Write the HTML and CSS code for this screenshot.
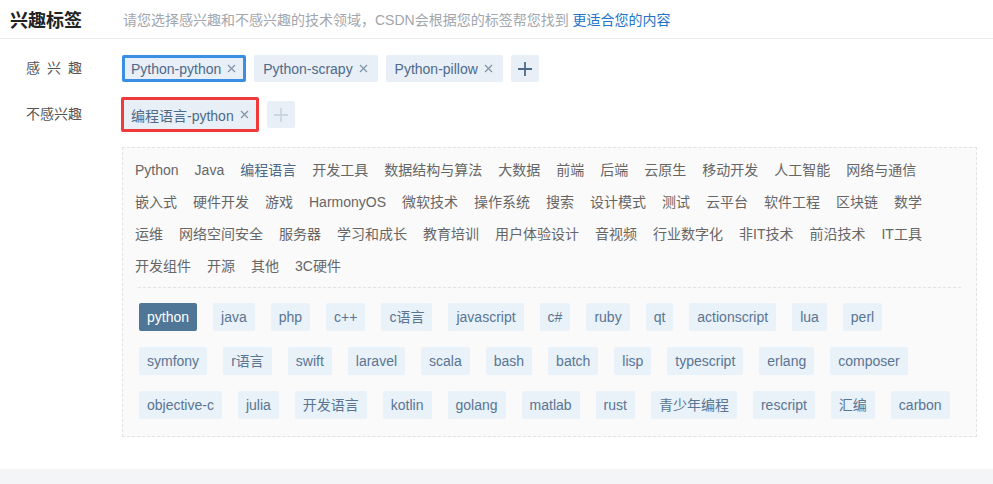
FILE: index.html
```html
<!DOCTYPE html>
<html lang="zh-CN">
<head>
  <meta charset="UTF-8">
  <meta name="viewport" content="width=device-width, initial-scale=1.0" />
  <title>兴趣标签</title>
  <link rel="stylesheet" href="styles.css">
</head>
<body>
  <header class="head">
    <h2 class="head-title">兴趣标签</h2>
    <p class="head-desc">请您选择感兴趣和不感兴趣的技术领域，CSDN会根据您的标签帮您找到 <a href="#">更适合您的内容</a></p>
  </header>

  <section class="rows">
    <div class="row">
      <div class="row-label"><span>感兴趣</span></div>
      <div class="row-tags">
        <span class="tag tag-focus">Python-python <svg class="x" viewBox="0 0 9 9"><path d="M1 1L8 8M8 1L1 8"/></svg></span>
        <span class="tag">Python-scrapy <svg class="x" viewBox="0 0 9 9"><path d="M1 1L8 8M8 1L1 8"/></svg></span>
        <span class="tag">Python-pillow <svg class="x" viewBox="0 0 9 9"><path d="M1 1L8 8M8 1L1 8"/></svg></span>
        <span class="add"><svg viewBox="0 0 14 14"><path d="M7 0V14M0 7H14"/></svg></span>
      </div>
    </div>
    <div class="row">
      <div class="row-label"><span>不感兴趣</span></div>
      <div class="row-tags">
        <span class="tag tag-flag">编程语言-python <svg class="x" viewBox="0 0 9 9"><path d="M1 1L8 8M8 1L1 8"/></svg></span>
        <span class="add add-off"><svg viewBox="0 0 14 14"><path d="M7 0V14M0 7H14"/></svg></span>
      </div>
    </div>
  </section>

  <div class="picker">
    <ul class="cats">
      <li>Python</li>
      <li>Java</li>
      <li class="on">编程语言</li>
      <li>开发工具</li>
      <li>数据结构与算法</li>
      <li>大数据</li>
      <li>前端</li>
      <li>后端</li>
      <li>云原生</li>
      <li>移动开发</li>
      <li>人工智能</li>
      <li>网络与通信</li>
      <li>嵌入式</li>
      <li>硬件开发</li>
      <li>游戏</li>
      <li>HarmonyOS</li>
      <li>微软技术</li>
      <li>操作系统</li>
      <li>搜索</li>
      <li>设计模式</li>
      <li>测试</li>
      <li>云平台</li>
      <li>软件工程</li>
      <li>区块链</li>
      <li>数学</li>
      <li>运维</li>
      <li>网络空间安全</li>
      <li>服务器</li>
      <li>学习和成长</li>
      <li>教育培训</li>
      <li>用户体验设计</li>
      <li>音视频</li>
      <li>行业数字化</li>
      <li>非IT技术</li>
      <li>前沿技术</li>
      <li>IT工具</li>
      <li>开发组件</li>
      <li>开源</li>
      <li>其他</li>
      <li>3C硬件</li>
    </ul>
    <div class="divider"></div>
    <ul class="langs">
      <li class="active">python</li>
      <li>java</li>
      <li>php</li>
      <li>c++</li>
      <li>c语言</li>
      <li>javascript</li>
      <li>c#</li>
      <li>ruby</li>
      <li>qt</li>
      <li>actionscript</li>
      <li>lua</li>
      <li>perl</li>
      <li>symfony</li>
      <li>r语言</li>
      <li>swift</li>
      <li>laravel</li>
      <li>scala</li>
      <li>bash</li>
      <li>batch</li>
      <li>lisp</li>
      <li>typescript</li>
      <li>erlang</li>
      <li>composer</li>
      <li>objective-c</li>
      <li>julia</li>
      <li>开发语言</li>
      <li>kotlin</li>
      <li>golang</li>
      <li>matlab</li>
      <li>rust</li>
      <li>青少年编程</li>
      <li>rescript</li>
      <li>汇编</li>
      <li>carbon</li>
    </ul>
  </div>

  <div class="page-foot"></div>
</body>
</html>
```

FILE: styles.css
```css
* {
  box-sizing: border-box;
  margin: 0;
  padding: 0;
}

body {
  background: #fff;
  font-family: "Liberation Sans", "Noto Sans CJK SC", sans-serif;
  font-size: 14px;
  color: #333;
}

ul {
  list-style: none;
}

/* header */
.head {
  display: flex;
  align-items: center;
  height: 39px;
  padding-left: 10px;
  border-bottom: 1px solid #ececec;
}

.head-title {
  width: 113px;
  font-size: 18px;
  font-weight: bold;
  color: #222;
}

.head-desc {
  font-size: 14px;
  color: #a2a6ad;
}

.head-desc a {
  color: #2273c9;
  text-decoration: none;
}

/* selected rows */
.rows {
  padding-top: 16px;
}

.row {
  display: flex;
  align-items: center;
  margin-bottom: 15px;
}

.row-label {
  width: 121px;
  padding-left: 26px;
  padding-bottom: 3px;
  color: #555;
}

.row-label span {
  display: block;
  width: 56px;
  text-align-last: justify;
}

.row-tags {
  display: flex;
  align-items: center;
  gap: 8px;
}

.tag {
  display: inline-flex;
  align-items: center;
  height: 27px;
  padding: 0 10px 0 9px;
  background: #e8eff7;
  border-radius: 2px;
  color: #4e6a89;
  white-space: pre;
}

.tag .x {
  width: 9px;
  height: 9px;
  margin-left: 2px;
  fill: none;
  stroke: #8193a7;
  stroke-width: 1.2;
}

.tag-focus {
  margin-left: 1px;
  box-shadow: inset 0 0 0 3px #3a8fe4;
}

.tag-flag {
  height: 35px;
  padding-left: 10px;
  box-shadow: inset 0 0 0 3px #f1383b;
}

.add {
  display: inline-flex;
  align-items: center;
  justify-content: center;
  width: 28px;
  height: 27px;
  background: #e8eff7;
  border-radius: 2px;
}

.add svg {
  width: 14px;
  height: 14px;
  fill: none;
  stroke: #4e6a89;
  stroke-width: 1.8;
}

.add-off svg {
  stroke: #c9d5e1;
}

/* picker panel */
.picker {
  margin: 0 16px 0 122px;
  background: #fafafa;
  border: 1px dashed #e2e2e2;
}

.cats {
  display: flex;
  flex-wrap: wrap;
  padding: 6px 12px 0;
  line-height: 32px;
}

.cats li {
  margin-right: 16px;
  color: #666;
}

.cats li.on {
  color: #4e6a89;
}

.divider {
  margin: 5px 15px 0;
  border-top: 1px dashed #e2e2e2;
}

.langs {
  display: flex;
  flex-wrap: wrap;
  gap: 16px;
  padding: 15px 15px 17px 16px;
}

.langs li {
  height: 28px;
  line-height: 28px;
  padding: 0 8px;
  background: #e9f1f9;
  border-radius: 2px;
  color: #5a7592;
}

.langs li.active {
  background: #4f7697;
  color: #fff;
}

.page-foot {
  height: 16px;
  margin-top: 32px;
  background: #f4f5f7;
}
```
